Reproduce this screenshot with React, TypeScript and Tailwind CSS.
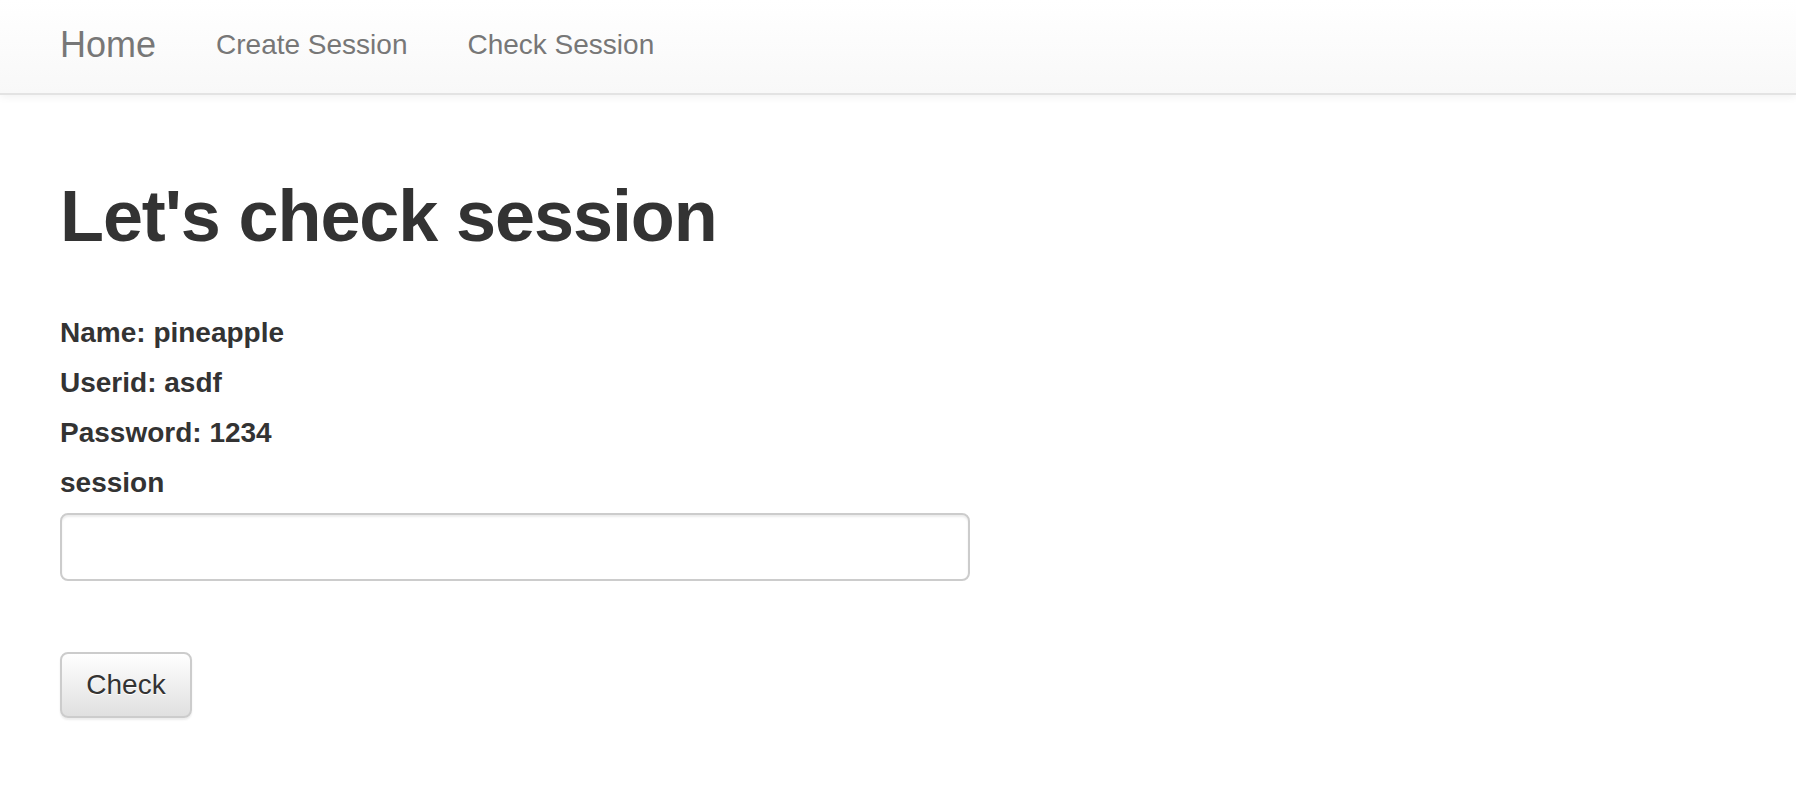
import React, { FC, useState } from 'react';

const navLinks = [
  { id: 'create', title: 'Create Session' },
  { id: 'check', title: 'Check Session' },
];

const sessionInfo = [
  { label: 'Name', value: 'pineapple' },
  { label: 'Userid', value: 'asdf' },
  { label: 'Password', value: '1234' },
];

const NavBar: FC = () => (
  <div className="h-[95px] w-full border-b-2 border-[#e3e3e3] bg-gradient-to-b from-white to-[#f8f8f8] shadow-[0_2px_8px_rgba(0,0,0,0.06)]">
    <div className="flex h-full items-center gap-[60px] px-[60px] pb-[3px]">
      <a className="cursor-pointer text-[36px] leading-[40px] text-[#777]">Home</a>
      {navLinks.map((link) => (
        <a key={link.id} className="cursor-pointer text-[28px] leading-[40px] text-[#777] hover:text-[#333]">
          {link.title}
        </a>
      ))}
    </div>
  </div>
);

const App: FC = () => {
  const [session, setSession] = useState('');
  return (
    <div className="min-h-screen w-full bg-white text-[#333]" style={{ fontFamily: '"Liberation Sans", Arial, sans-serif' }}>
      <NavBar />
      <div className="px-[60px]">
        <h1 className="mt-[81px] text-[72px] font-bold leading-[80px] tracking-[-1.1px]">Let's check session</h1>
        <div className="mt-[57px] flex flex-col">
          {sessionInfo.map((item) => (
            <label key={item.label} className="mb-[10px] text-[28px] font-bold leading-[40px]">
              {item.label}: {item.value}
            </label>
          ))}
          <label className="mb-[10px] text-[28px] font-bold leading-[40px]">session</label>
          <input
            value={session}
            onChange={(e) => setSession(e.target.value)}
            className="h-[68px] w-[910px] rounded-[8px] border-2 border-[#ccc] bg-white px-[24px] text-[28px] shadow-[inset_0_2px_2px_rgba(0,0,0,0.075)] outline-none"
          />
        </div>
        <button className="mt-[71px] h-[66px] w-[132px] rounded-[8px] border-2 border-[#ccc] bg-gradient-to-b from-white to-[#e0e0e0] text-[28px] text-[#333] shadow-[0_2px_2px_rgba(0,0,0,0.075)] [text-shadow:0_1px_0_#fff]">
          Check
        </button>
      </div>
    </div>
  );
};

export default App;
